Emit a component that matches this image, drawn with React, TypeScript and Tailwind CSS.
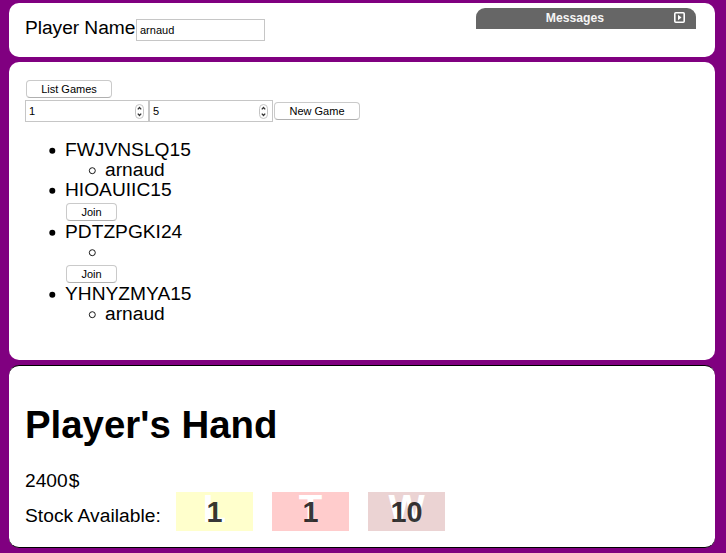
import type { ReactNode } from "react";

function Button({ children, className }: { children: ReactNode; className: string }) {
  return (
    <button
      className={`block h-[18px] shrink-0 rounded-[4px] border border-[#cacaca] border-b-[#b0b0b0] bg-white text-center text-[11px] leading-[16px] ${className}`}
    >
      {children}
    </button>
  );
}

function Stepper({ value }: { value: string }) {
  return (
    <div className="flex h-[22px] w-[124px] items-center justify-between border border-[#c6c6c6] bg-white pr-[4px] pl-[3px] text-[11px]">
      <span>{value}</span>
      <svg width="9" height="15" viewBox="0 0 9 15" fill="none">
        <rect x="0.5" y="0.5" width="8" height="14" rx="4" stroke="#c4c4c4" />
        <path d="M2.8 5.4 4.5 3.5 6.2 5.4M2.8 9.6 4.5 11.5 6.2 9.6" stroke="#333" strokeWidth="1.3" />
      </svg>
    </div>
  );
}

function Row({ label, nested = false }: { label: string; nested?: boolean }) {
  return (
    <div className={`flex h-5 items-center ${nested ? "pl-[63px]" : "pl-6"}`}>
      <svg width="8" height="8" viewBox="0 0 8 8" className={`mt-[3px] shrink-0 ${nested ? "mr-[9px]" : "mr-2"}`}>
        {nested ? (
          <circle cx="4.3" cy="3.7" r="3" fill="none" stroke="#000" strokeWidth="0.9" />
        ) : (
          <circle cx="3.3" cy="3.8" r="3" fill="#000" />
        )}
      </svg>
      <span className="pt-[2px]">{label}</span>
    </div>
  );
}

function Stock({ letter, count, color }: { letter: string; count: string; color: string }) {
  return (
    <div className={`relative h-[39px] w-[77px] ${color}`}>
      <span className="absolute inset-x-0 top-[-3px] text-center text-[38.4px] leading-[39px] font-bold text-white">
        {letter}
      </span>
      <span className="absolute inset-x-0 top-0 text-center text-[28.8px] leading-[40px] font-bold text-black/80">
        {count}
      </span>
    </div>
  );
}

export default function App() {
  return (
    <div className="h-[553px] w-[726px] overflow-hidden bg-[#800080] pt-[3px] pl-[9px] font-['Liberation_Sans',Arial,sans-serif] text-[19.2px] leading-5 text-black">
      <section className="flex h-[54px] w-[706px] items-start justify-between rounded-[10px] bg-white pr-[19px] pl-4">
        <div className="flex">
          <span className="mt-[15px] w-[111px] whitespace-nowrap tracking-[-0.05px]">Player Name</span>
          <div className="mt-4 h-[22px] w-[129px] border border-[#c6c6c6] pl-[3px] text-[11px] leading-[21px]">arnaud</div>
        </div>
        <div className="relative mt-[5px] h-[21px] w-[220px] rounded-t-[9px] bg-[#666] pr-[22px] text-center text-[12.2px] leading-[20px] font-bold text-[#f5f5f5]">
          Messages
          <svg className="absolute top-[4px] right-[11px]" width="11" height="11" viewBox="0 0 11 11">
            <rect x="0.8" y="0.8" width="9.4" height="9.4" rx="1" fill="none" stroke="#fff" strokeWidth="1.6" />
            <path d="M4 2.8 7.5 5.5 4 8.2Z" fill="#fff" />
          </svg>
        </div>
      </section>

      <section className="mt-[5px] h-[298px] w-[706px] rounded-[10px] bg-white pt-[18px] pl-4">
        <Button className="ml-px w-[86px]">List Games</Button>
        <div className="mt-[2px] flex items-center">
          <Stepper value="1" />
          <Stepper value="5" />
          <Button className="ml-px w-[86px]">New Game</Button>
        </div>
        <div className="mt-[17px]">
          <Row label="FWJVNSLQ15" />
          <Row label="arnaud" nested />
          <Row label="HIOAUIIC15" />
          <Button className="mt-[4px] ml-[41px] w-[51px]">Join</Button>
          <Row label="PDTZPGKI24" />
          <Row label="" nested />
          <Button className="mt-[4px] ml-[41px] w-[51px]">Join</Button>
          <Row label="YHNYZMYA15" />
          <Row label="arnaud" nested />
        </div>
      </section>

      <section className="mt-[5px] h-[183px] w-[706px] rounded-[10px] border-y border-black bg-white pl-4">
        <h1 className="pt-[37px] text-[38.4px] leading-[44px] font-bold">Player's Hand</h1>
        <div className="mt-[24px] flex h-5 gap-px">
          <span>2400</span>
          <span>$</span>
        </div>
        <div className="mt-px flex">
          <span className="w-[151px] pt-[14px] tracking-[0.05px]">Stock Available:</span>
          <div className="flex gap-[19px]">
            <Stock letter="L" count="1" color="bg-[#ffffcc]" />
            <Stock letter="T" count="1" color="bg-[#ffcccc]" />
            <Stock letter="W" count="10" color="bg-[#ebd3d3]" />
          </div>
        </div>
      </section>
    </div>
  );
}
